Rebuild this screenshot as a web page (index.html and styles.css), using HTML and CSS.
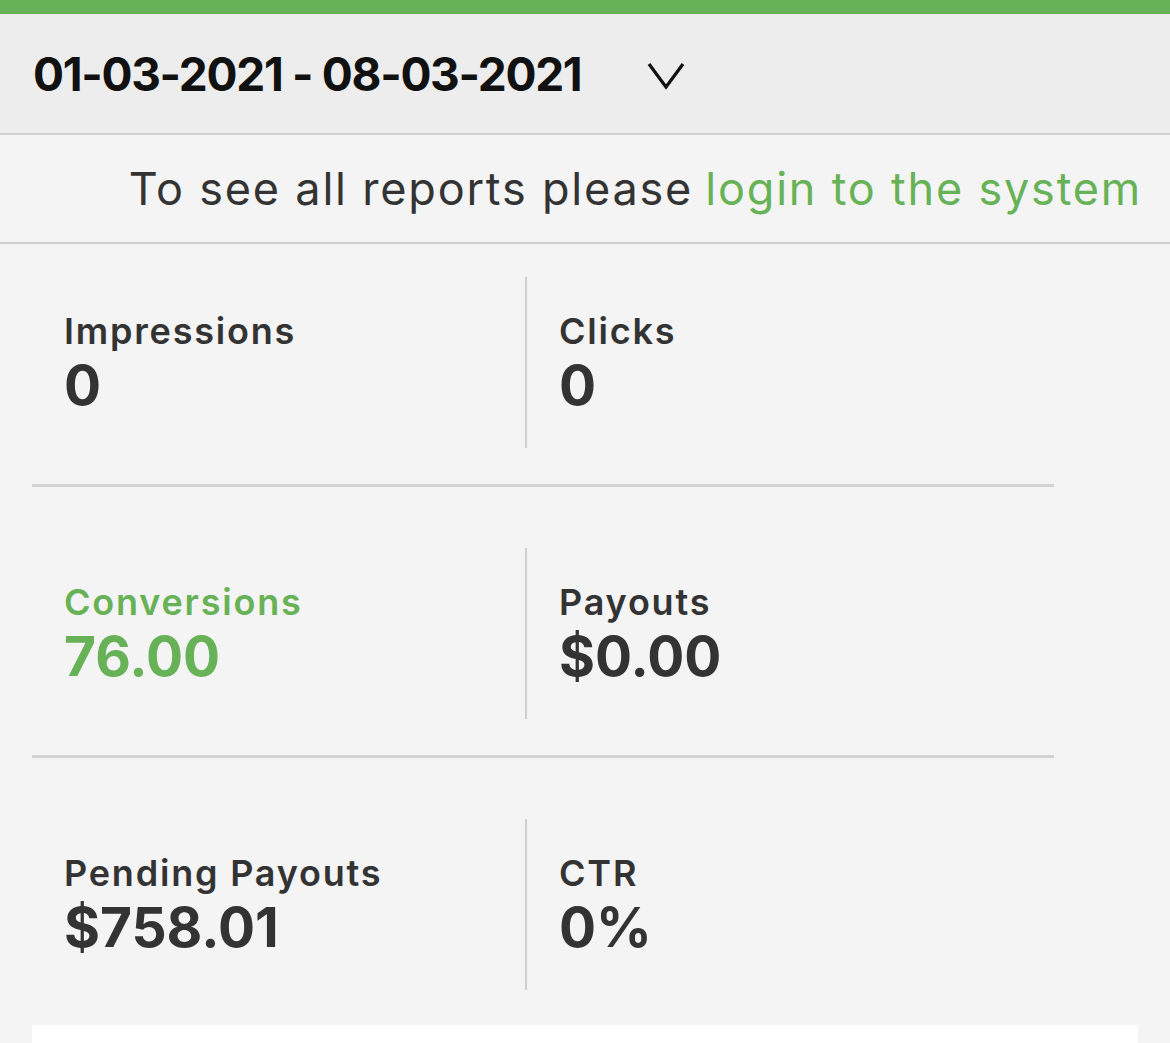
FILE: index.html
```html
<!DOCTYPE html>
<html>
<head>
<meta charset="utf-8">
<link rel="stylesheet" href="styles.css">
</head>
<body>
<div class="topbar"></div>
<header class="range">
  <span class="range-text">01-03-2021 - 08-03-2021</span>
  <svg class="chevron" width="40" height="28" viewBox="0 0 40 28"><path d="M2 2 L19 25 L36 2" fill="none" stroke="#111" stroke-width="3.2" stroke-linejoin="miter"/></svg>
</header>
<div class="notice">To see all reports please <a class="login" href="#">login to the system</a></div>
<main class="stats">
  <div class="row">
    <div class="cell"><div class="label">Impressions</div><div class="value">0</div></div>
    <div class="cell right"><div class="label">Clicks</div><div class="value">0</div></div>
  </div>
  <div class="sep"></div>
  <div class="row">
    <div class="cell green"><div class="label">Conversions</div><div class="value">76.00</div></div>
    <div class="cell right"><div class="label">Payouts</div><div class="value">$0.00</div></div>
  </div>
  <div class="sep"></div>
  <div class="row">
    <div class="cell"><div class="label">Pending Payouts</div><div class="value">$758.01</div></div>
    <div class="cell right"><div class="label">CTR</div><div class="value">0%</div></div>
  </div>
  <div class="card"></div>
</main>
</body>
</html>
```
FILE: styles.css
```css
html, body {
  margin: 0;
  padding: 0;
  background: #f4f4f4;
  font-family: Inter, "Noto Sans", sans-serif;
  color: #333;
  overflow: hidden;
}
.topbar {
  height: 14px;
  background: #67b257;
}
.range {
  height: 119px;
  background: #ededed;
  border-bottom: 2px solid #cfcfcf;
  display: flex;
  align-items: center;
  padding-left: 33px;
}
.range-text {
  font-size: 46px;
  font-weight: 700;
  color: #111;
  letter-spacing: -1.3px;
}
.chevron {
  margin-left: 66px;
  margin-top: 4px;
}
.notice {
  height: 107px;
  border-bottom: 2px solid #cfcfcf;
  display: flex;
  align-items: center;
  justify-content: flex-end;
  padding-right: 28px;
  font-size: 45px;
  font-weight: 400;
  letter-spacing: 1.8px;
  color: #333;
}
.login {
  color: #67b257;
  text-decoration: none;
  margin-left: 0.27em;
}
.stats {
  padding: 33px 0 0 32px;
}
.row {
  display: grid;
  grid-template-columns: 493px 529px;
  width: 1022px;
  height: 171px;
}
.cell {
  display: flex;
  flex-direction: column;
  justify-content: center;
  padding-left: 32px;
}
.cell.right {
  border-left: 2px solid #cfcfcf;
  padding-left: 32px;
}
.label {
  font-size: 36px;
  font-weight: 600;
  line-height: 40px;
  letter-spacing: 1.8px;
  margin-bottom: 4px;
}
.value {
  font-size: 55px;
  font-weight: 700;
  line-height: 60px;
}
.green {
  color: #67b257;
}
.sep {
  width: 1022px;
  height: 3px;
  background: #d2d2d2;
  margin: 36px 0 61px;
}
.card {
  margin-top: 35px;
  width: 1106px;
  height: 40px;
  background: #fff;
}
```
